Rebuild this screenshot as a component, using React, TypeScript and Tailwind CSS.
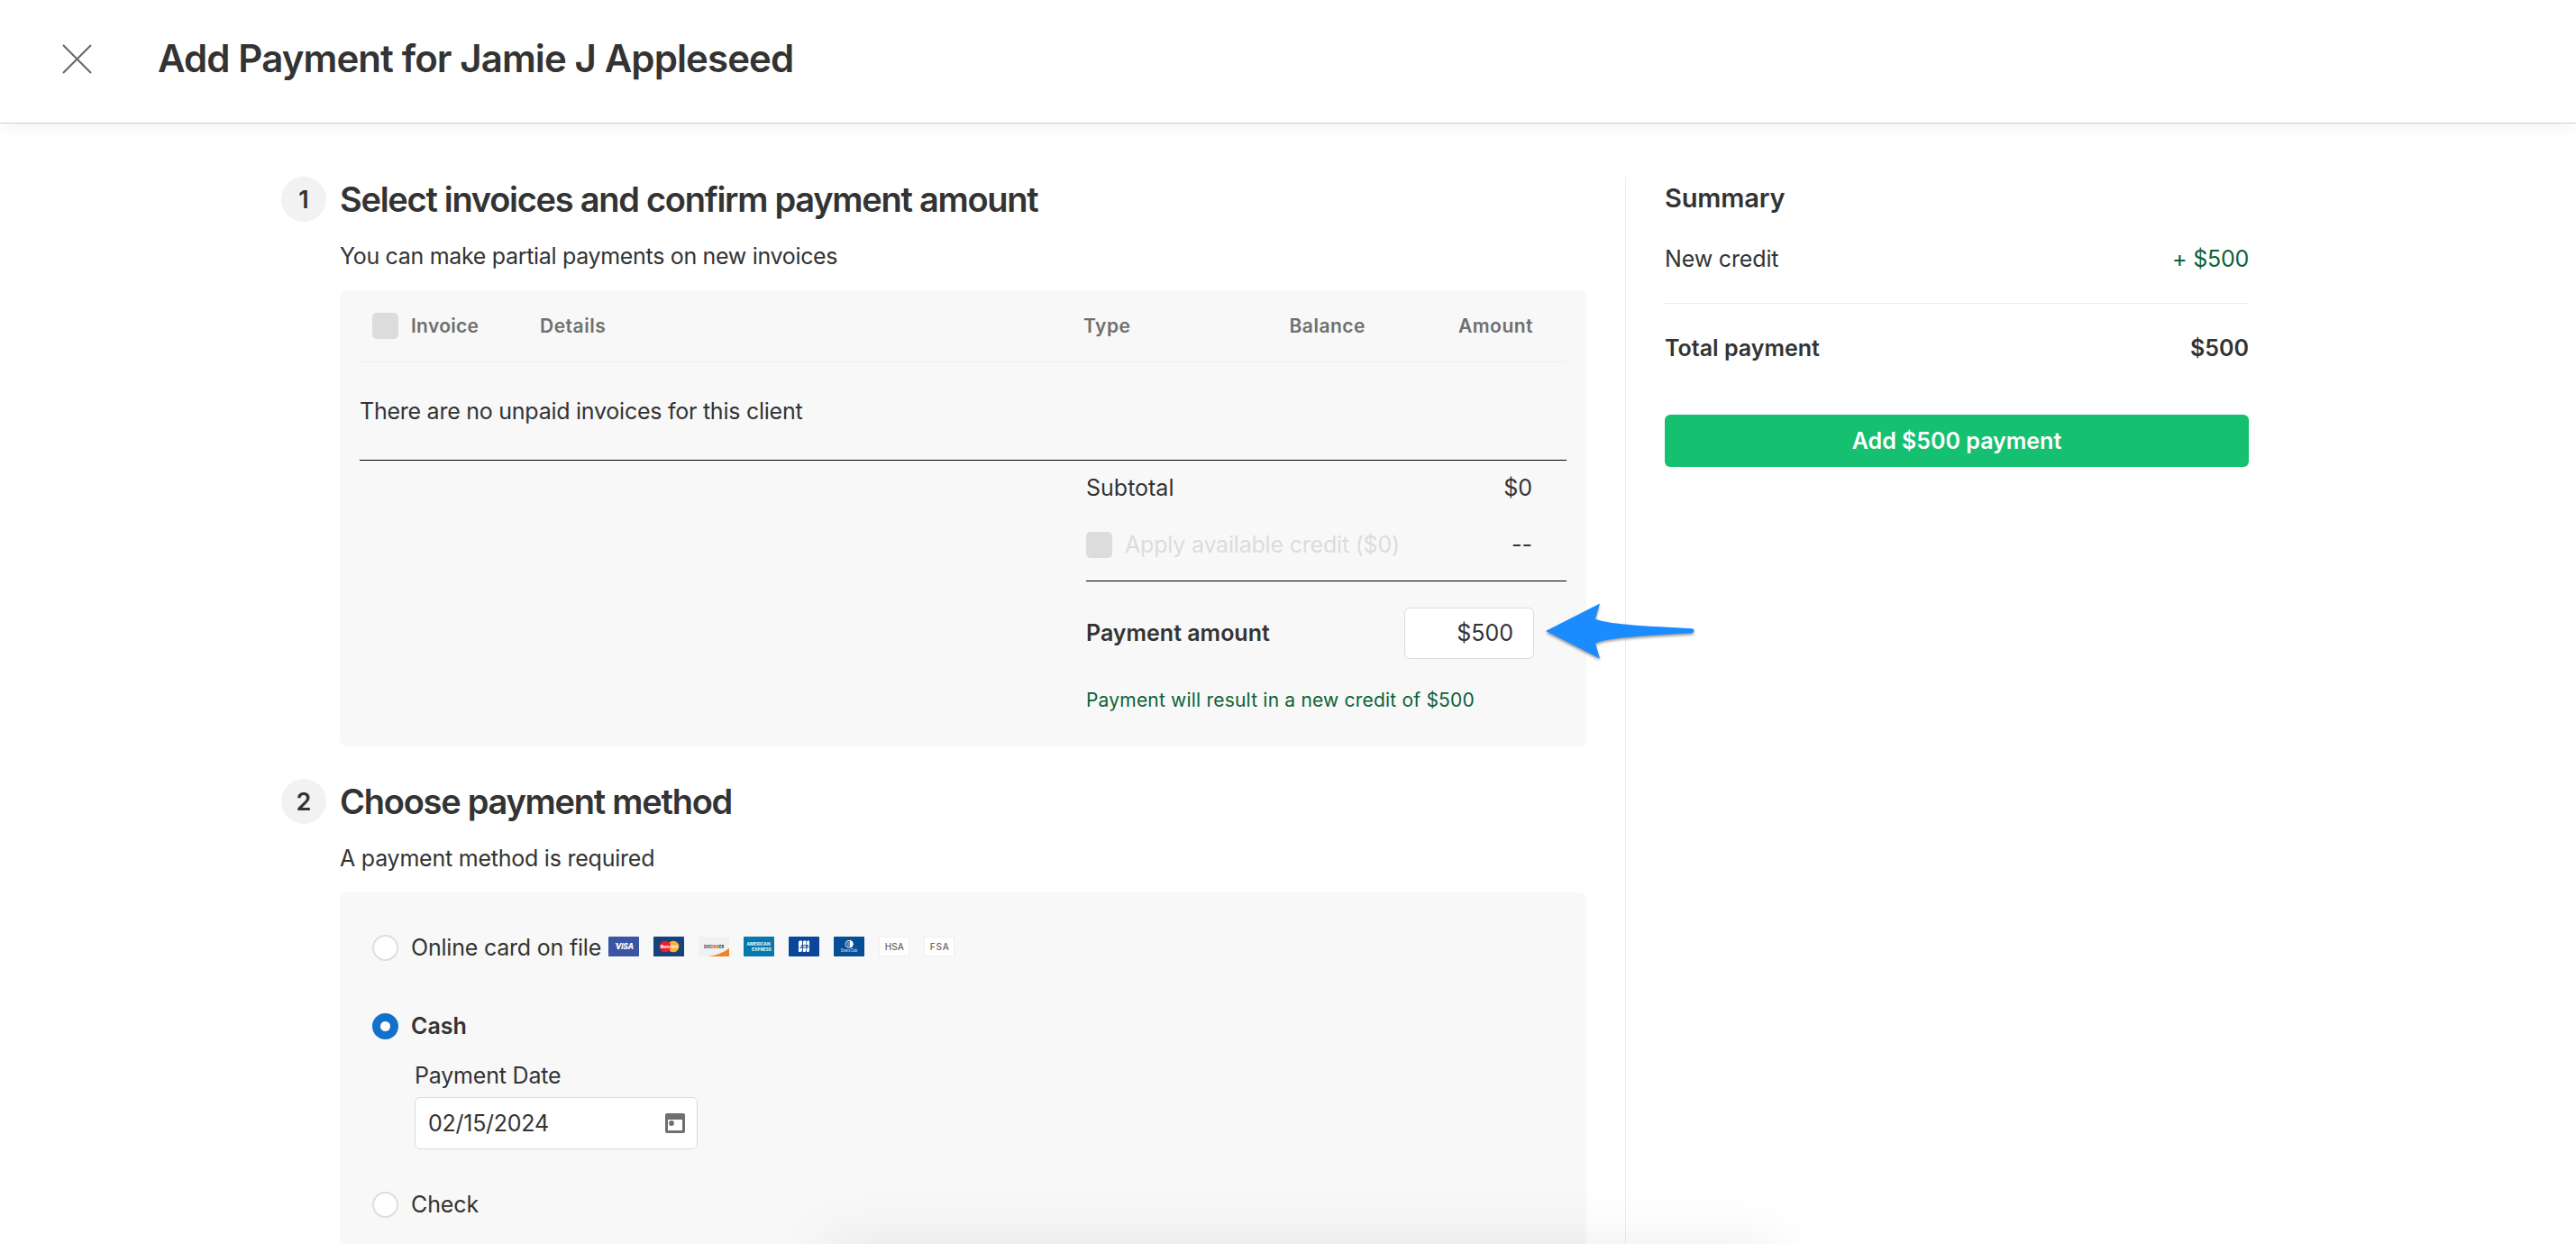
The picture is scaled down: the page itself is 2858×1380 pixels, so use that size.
import type { ReactNode } from "react";

function StepHeading({ n, title, note, titleClass, noteClass }: { n: number; title: string; note: string; titleClass: string; noteClass: string }) {
  return (
    <>
      <div className="flex h-[50px] items-center">
        <div className="flex size-[50px] items-center justify-center rounded-full bg-[#f2f2f2] text-[27px] font-semibold">{n}</div>
        <h2 className={`ml-[15px] whitespace-nowrap text-[38px] leading-none font-semibold ${titleClass}`}>{title}</h2>
      </div>
      <p className={`ml-[65px] flex h-[76px] items-center whitespace-nowrap ${noteClass}`}>{note}</p>
    </>
  );
}

function CheckBox() {
  return <span className="size-[29px] shrink-0 rounded-[5px] bg-[#dcdcdc]" />;
}

function Radio({ checked = false }: { checked?: boolean }) {
  return checked ? (
    <span className="flex size-[29px] shrink-0 items-center justify-center rounded-full bg-[#1371c9]">
      <span className="size-[11px] rounded-full bg-white" />
    </span>
  ) : (
    <span className="size-[29px] shrink-0 rounded-full border-2 border-[#dedede] bg-white" />
  );
}

function Card({ bg, children }: { bg: string; children: ReactNode }) {
  return (
    <svg width="34" height="22" viewBox="0 0 34 22" className="shrink-0 font-[Inter,sans-serif]">
      <rect width="34" height="22" rx="0.8" fill={bg} />
      {children}
    </svg>
  );
}

function Cards() {
  return (
    <div className="mb-[3px] ml-2 flex gap-4">
      <Card bg="#3b55a5">
        <path d="M7 7h3.2l2 6.2z" fill="#f0a23c" />
        <text x="18" y="14.3" fontSize="9" fontWeight="800" fontStyle="italic" textAnchor="middle" textLength="20" lengthAdjust="spacingAndGlyphs" fill="#fff">VISA</text>
      </Card>
      <Card bg="#16437b">
        <circle cx="22" cy="11" r="6.3" fill="#fbb034" />
        <circle cx="13" cy="11" r="6.3" fill="#ed1c2e" />
        <text x="7.7" y="12.7" fontSize="4.5" fontWeight="800" fontStyle="italic" textLength="19" lengthAdjust="spacingAndGlyphs" fill="#fff">MasterCard</text>
      </Card>
      <Card bg="#f0f2f2">
        <path d="M34 13v9H10.5Q25 20 34 13z" fill="#f58220" />
        <text x="6" y="13" fontSize="5.2" fontWeight="700" textLength="10" lengthAdjust="spacingAndGlyphs" fill="#3a3a3a">DISC</text>
        <circle cx="18" cy="11" r="2.1" fill="#f58220" />
        <text x="20" y="13" fontSize="5.2" fontWeight="700" textLength="8" lengthAdjust="spacingAndGlyphs" fill="#3a3a3a">VER</text>
      </Card>
      <Card bg="#0678ad">
        <text x="3.5" y="10.2" fontSize="5.2" fontWeight="800" textLength="26" lengthAdjust="spacingAndGlyphs" fill="#d9eef6">AMERICAN</text>
        <text x="9" y="15.8" fontSize="5.2" fontWeight="800" textLength="22" lengthAdjust="spacingAndGlyphs" fill="#d9eef6">EXPRESS</text>
      </Card>
      <Card bg="#0b469b">
        <path d="M12.4 4.6H15v10.3q0 2-2 2h-2V6.6q0-2 1.4-2zM17 4.6h2.4v10.3q0 2-1.5 2h-2V6.6q0-2 1.1-2zM21.4 4.6H23v10.3q0 2-1.2 2h-1.800V6.6q0-2 1.4-2z" fill="#fff" />
        <text x="17" y="12.8" fontSize="5" fontWeight="800" textAnchor="middle" textLength="10" lengthAdjust="spacingAndGlyphs" fill="#0b469b">JCB</text>
      </Card>
      <Card bg="#064e95">
        <circle cx="17" cy="8.3" r="4" fill="none" stroke="#e6eef6" strokeWidth="1" />
        <path d="M17.6 4.3a4 4 0 0 1 0 8z" fill="#fff" />
        <path d="M16 6v4.6" stroke="#fff" strokeWidth="0.8" />
        <text x="8" y="16.8" fontSize="4.2" fontWeight="600" textLength="18" lengthAdjust="spacingAndGlyphs" fill="#c9dcec">Diners Club</text>
      </Card>
      {["HSA", "FSA"].map((t) => (
        <Card key={t} bg="#ececec">
          <rect x="0.8" y="0.8" width="32.4" height="20.4" fill="#fff" />
          <text x="17.3" y="14.6" fontSize="10" fontWeight="500" textAnchor="middle" textLength="21" fill="#666">{t}</text>
        </Card>
      ))}
    </div>
  );
}

function Arrow() {
  return (
    <svg width="190" height="80" viewBox="0 0 190 80" className="absolute top-[-15px] left-[146px] z-10 drop-shadow-[0_2px_1.5px_rgba(0,0,0,0.4)]">
      <path d="M10 40 70 9.500 65 26.500C80 33 120 34.500 172 37.200q2.500 0.300 2.500 2.500t-2.500 2.600C120 45.500 80 47 65 53.500L70 70.500z" fill="#1a8cff" />
    </svg>
  );
}

export default function App() {
  return (
    <div className="relative h-[1380px] w-[2858px] overflow-hidden bg-white font-[Inter,sans-serif] text-[25px] leading-none text-[#333]">
      <header className="flex h-[137px] items-center border-b border-[#c5cfe0] pb-[6px] pl-[69px] shadow-[0_10px_14px_-6px_rgba(60,80,130,0.08)]">
        <svg width="33" height="33" viewBox="0 0 33 33" fill="none" stroke="#666" strokeWidth="2">
          <path d="M1 1l31 31M32 1L1 32" />
        </svg>
        <h1 className="ml-[73px] text-[42px] font-semibold tracking-[-0.9px]">Add Payment for Jamie J Appleseed</h1>
      </header>

      <div className="flex pt-[59px] pl-[312px]">
        <main className="w-[1448px]">
          <StepHeading n={1} title="Select invoices and confirm payment amount" note="You can make partial payments on new invoices" titleClass="tracking-[-1.27px]" noteClass="tracking-[-0.32px]" />
          <section className="ml-[65px] h-[506px] rounded-lg bg-[#f8f8f8] px-[22px]">
            <div className="flex h-20 items-center border-b border-[#f1f1f1] pl-[14px] text-[21px] font-semibold tracking-[0.5px] text-[#6f6f6f]">
              <CheckBox />
              <span className="ml-[14px] w-[143px] tracking-[0.3px]">Invoice</span>
              <span className="w-[603px]">Details</span>
              <span className="w-[180px]">Type</span>
              <span className="w-[133px] text-right">Balance</span>
              <span className="w-[186px] text-right">Amount</span>
            </div>
            <div className="flex h-[109px] items-center border-b border-black tracking-[-0.25px]">There are no unpaid invoices for this client</div>
            <div className="ml-[806px]">
              <div className="flex h-[60px] items-center justify-between pr-[38px]">
                <span>Subtotal</span>
                <span>$0</span>
              </div>
              <div className="h-[74px] border-b border-black">
                <div className="flex h-[67px] items-center pr-[38px]">
                  <CheckBox />
                  <span className="ml-[14px] flex-1 tracking-[-0.2px] text-[#dcdcdc]">Apply available credit ($0)</span>
                  <span>--</span>
                </div>
              </div>
              <div className="mt-[29px] flex h-[57px] items-center justify-between pr-9">
                <span className="font-semibold">Payment amount</span>
                <div className="relative flex h-[57px] w-[144px] items-center justify-end rounded-md border border-[#dcdcdc] bg-white pr-[22px]">
                  $500
                  <Arrow />
                </div>
              </div>
              <p className="flex h-[90px] items-center text-[21px] tracking-[0.2px] text-[#0c6236]">Payment will result in a new credit of $500</p>
            </div>
          </section>

          <div className="mt-9">
            <StepHeading n={2} title="Choose payment method" note="A payment method is required" titleClass="tracking-[-1.25px]" noteClass="tracking-[-0.23px]" />
          </div>
          <section className="ml-[65px] h-[460px] rounded-lg bg-[#f8f8f8] pt-[47px] pl-9">
            <div className="flex h-[29px] items-center">
              <Radio />
              <span className="ml-[14px] tracking-[-0.21px]">Online card on file</span>
              <Cards />
            </div>
            <div className="mt-[58px] flex h-[29px] items-center">
              <Radio checked />
              <span className="ml-[14px] font-semibold">Cash</span>
            </div>
            <div className="mt-6 ml-[47px]">
              <div className="flex h-[33px] items-center tracking-[-0.2px]">Payment Date</div>
              <div className="mt-[7px] flex h-[58px] w-[314px] items-center justify-between rounded-md border border-[#dcdcdc] bg-white pr-[13px] pl-[14px] tracking-[-0.26px]">
                <span>02/15/2024</span>
                <svg width="22" height="22" viewBox="0 0 22 22">
                  <path fillRule="evenodd" d="M2 0h18a2 2 0 0 1 2 2v18a2 2 0 0 1-2 2H2a2 2 0 0 1-2-2V2a2 2 0 0 1 2-2zM3 7v12h16V7z" fill="#6f6f6f" />
                  <circle cx="7" cy="11" r="2.9" fill="#6f6f6f" />
                </svg>
              </div>
            </div>
            <div className="mt-[47px] flex h-[29px] items-center">
              <Radio />
              <span className="ml-[14px] tracking-[-0.13px]">Check</span>
            </div>
          </section>
        </main>

        <aside className="ml-[43px] h-[1190px] w-[692px] border-l border-[#eeeeee] pl-[43px]">
          <h3 className="flex h-[47px] items-center text-[29px] font-semibold tracking-[-0.15px]">Summary</h3>
          <div className="flex h-[94px] items-center justify-between border-b border-[#ececec] pb-[5px]">
            <span className="tracking-[-0.15px]">New credit</span>
            <span className="tracking-[-0.23px] text-[#0c6236]">+ $500</span>
          </div>
          <div className="flex h-[98px] items-center justify-between font-semibold">
            <span>Total payment</span>
            <span>$500</span>
          </div>
          <button className="mt-[25px] flex h-[58px] w-full items-center justify-center rounded-md bg-[#15c171] font-semibold text-white">Add $500 payment</button>
        </aside>
      </div>

      <div className="absolute top-[1380px] left-[915px] h-20 w-[1056px] rounded-lg shadow-[0_0_68px_rgba(0,0,0,0.08)]" />
    </div>
  );
}
